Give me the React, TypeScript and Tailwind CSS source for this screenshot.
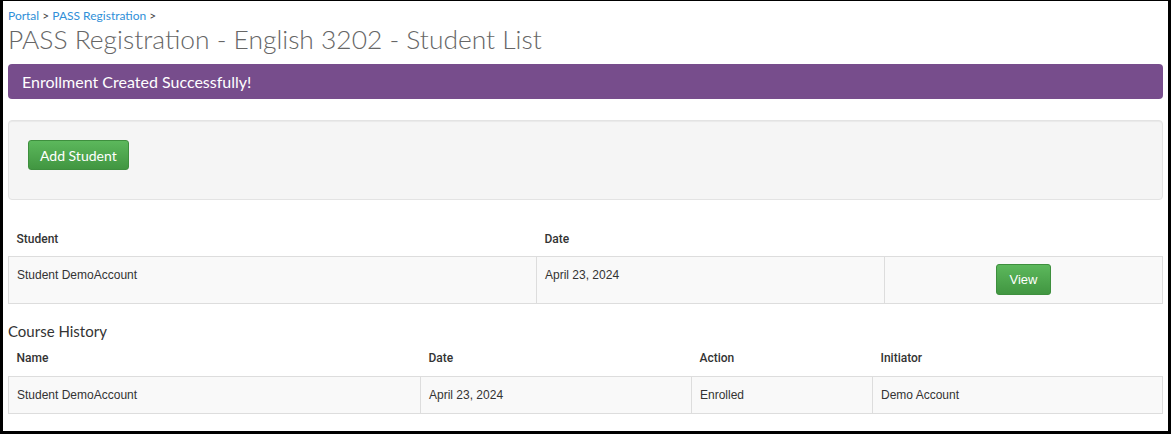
export default function App() {
  return (
    <div className="h-[434px] w-[1171px] overflow-hidden border-t border-r-[3px] border-b-[3px] border-l-[3px] border-black bg-white text-[#333]">
      <div className="px-[5px]" style={{ fontFamily: '"Liberation Sans", Arial, sans-serif' }}>
        <div className="pt-[7px] text-[12px] leading-[16px]" style={{ fontFamily: 'Lato, sans-serif' }}>
          <a className="text-[#2f8fd8]">Portal</a>
          <span className="text-[#444]"> &gt; </span>
          <a className="text-[#2f8fd8]">PASS Registration</a>
          <span className="text-[#444]"> &gt;</span>
        </div>
        <h1 className="text-[26.4px] leading-[30px] font-light text-[#666]" style={{ fontFamily: 'Lato, sans-serif' }}>
          PASS Registration - English 3202 - Student List
        </h1>
        <div className="mt-[10px] flex h-[35px] items-center rounded-[4px] bg-[#774d8c] px-[14px] text-[16px] text-white" style={{ fontFamily: 'Lato, sans-serif' }}>
          Enrollment Created Successfully!
        </div>

        <div className="mt-[21px] h-[80px] rounded-[4px] border border-[#e3e3e3] bg-[#f5f5f5] px-[19px] pt-[19px] shadow-[inset_0_1px_1px_rgba(0,0,0,0.05)]">
          <button className="h-[30px] rounded-[3px] border border-[#3e8f3e] bg-gradient-to-b from-[#5cb85c] to-[#419641] px-[11px] text-[14px] text-white" style={{ fontFamily: 'Lato, sans-serif' }}>
            Add Student
          </button>
        </div>

        <table className="mt-[22px] w-full border-collapse text-[12px]">
          <thead>
            <tr className="h-[34px]">
              <th className="w-[528px] px-[8px] text-left font-medium" style={{ fontFamily: 'Roboto, sans-serif' }}>Student</th>
              <th className="w-[348px] px-[8px] text-left font-medium" style={{ fontFamily: 'Roboto, sans-serif' }}>Date</th>
              <th className="px-[8px]" />
            </tr>
          </thead>
          <tbody>
            <tr className="bg-[#f9f9f9]">
              <td className="border border-[#ddd] px-[8px] pt-[10px] pb-[8px] align-top leading-[16px]">Student DemoAccount</td>
              <td className="border border-[#ddd] px-[8px] pt-[10px] pb-[8px] align-top leading-[16px]">April 23, 2024</td>
              <td className="h-[47px] border border-[#ddd] px-[8px] py-[7px] text-center">
                <button className="h-[31px] w-[55px] rounded-[3px] border border-[#3e8f3e] bg-gradient-to-b from-[#5cb85c] to-[#419641] text-[13px] text-white">
                  View
                </button>
              </td>
            </tr>
          </tbody>
        </table>

        <div className="mt-[18px] text-[15px] leading-[18px] text-[#333]" style={{ fontFamily: 'Lato, sans-serif' }}>Course History</div>

        <table className="w-full border-collapse text-[12px]">
          <thead>
            <tr className="h-[37px]">
              <th className="w-[412px] px-[8px] text-left font-medium" style={{ fontFamily: 'Roboto, sans-serif' }}>Name</th>
              <th className="w-[271px] px-[8px] text-left font-medium" style={{ fontFamily: 'Roboto, sans-serif' }}>Date</th>
              <th className="w-[181px] px-[8px] text-left font-medium" style={{ fontFamily: 'Roboto, sans-serif' }}>Action</th>
              <th className="px-[8px] text-left font-medium" style={{ fontFamily: 'Roboto, sans-serif' }}>Initiator</th>
            </tr>
          </thead>
          <tbody>
            <tr className="bg-[#f9f9f9]">
              <td className="h-[37px] border border-[#ddd] px-[8px] leading-[16px]">Student DemoAccount</td>
              <td className="border border-[#ddd] px-[8px] leading-[16px]">April 23, 2024</td>
              <td className="border border-[#ddd] px-[8px] leading-[16px]">Enrolled</td>
              <td className="border border-[#ddd] px-[8px] leading-[16px]">Demo Account</td>
            </tr>
          </tbody>
        </table>
      </div>
    </div>
  );
}
